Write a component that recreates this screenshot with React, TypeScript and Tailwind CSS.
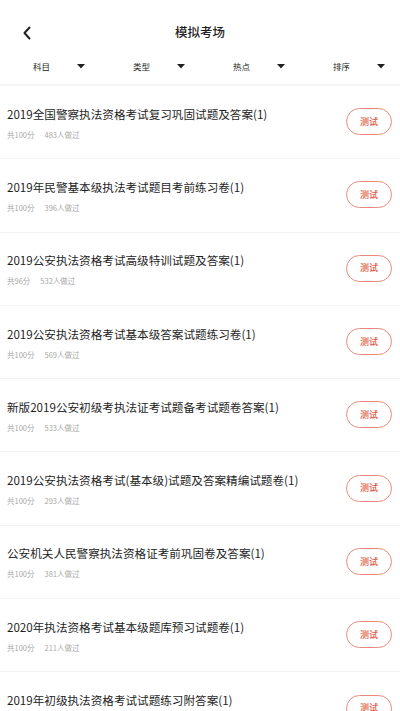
import React from "react";

const items = [
  { t: "2019全国警察执法资格考试复习巩固试题及答案(1)", s: "共100分", n: "483人做过" },
  { t: "2019年民警基本级执法考试题目考前练习卷(1)", s: "共100分", n: "396人做过" },
  { t: "2019公安执法资格考试高级特训试题及答案(1)", s: "共96分", n: "532人做过" },
  { t: "2019公安执法资格考试基本级答案试题练习卷(1)", s: "共100分", n: "569人做过" },
  { t: "新版2019公安初级考执法证考试题备考试题卷答案(1)", s: "共100分", n: "533人做过" },
  { t: "2019公安执法资格考试(基本级)试题及答案精编试题卷(1)", s: "共100分", n: "293人做过" },
  { t: "公安机关人民警察执法资格证考前巩固卷及答案(1)", s: "共100分", n: "381人做过" },
  { t: "2020年执法资格考试基本级题库预习试题卷(1)", s: "共100分", n: "211人做过" },
  { t: "2019年初级执法资格考试试题练习附答案(1)", s: "共100分", n: "186人做过" },
];

const filters = ["科目", "类型", "热点", "排序"];

function Caret() {
  return (
    <svg width="8" height="5" viewBox="0 0 8 5" className="block">
      <path d="M0 0 L8 0 L4 4.5 Z" fill="#222" />
    </svg>
  );
}

export default function App() {
  return (
    <div
      className="w-[400px] h-[711px] overflow-hidden bg-white text-[#1e1e1e]"
      style={{ fontFamily: '"Noto Sans CJK SC", "Noto Sans", sans-serif' }}
    >
      <div className="relative h-[56px] flex items-center justify-center pt-[8px]">
        <div className="absolute left-[22px] top-[26px]">
          <svg width="10" height="14" viewBox="0 0 10 14">
            <path d="M7.5 1.5 L2.5 7 L7.5 12.5" fill="none" stroke="#222" strokeWidth="2" strokeLinecap="round" strokeLinejoin="round" />
          </svg>
        </div>
        <div className="text-[12.5px] font-medium leading-none">模拟考场</div>
      </div>
      <div className="flex h-[30px] border-b-2 border-[#f4f5f7]">
        {filters.map((f) => (
          <div key={f} className="w-[100px] h-[20px] flex items-center pl-[33px] pr-[15px] justify-between">
            <span className="text-[8.5px] leading-none">{f}</span>
            <Caret />
          </div>
        ))}
      </div>
      <div>
        {items.map((it, i) => (
          <div
            key={i}
            className="h-[73.3px] box-border border-b border-[#f3f3f3] flex items-center justify-between pl-[7px] pr-[8px] pt-[1px]"
          >
            <div className="flex flex-col">
              <div className="text-[11.6px] leading-[16px] text-[#1e1e1e]">{it.t}</div>
              <div className="flex gap-[10px] mt-[8px] text-[7.5px] leading-[10px] text-[#a8a8a8]">
                <span>{it.s}</span>
                <span>{it.n}</span>
              </div>
            </div>
            <div className="w-[46px] h-[27px] rounded-full border-[1.5px] border-[#e98a7a] flex items-center justify-center text-[9px] font-medium text-[#e05a44] mb-[2px]">
              测试
            </div>
          </div>
        ))}
      </div>
    </div>
  );
}
